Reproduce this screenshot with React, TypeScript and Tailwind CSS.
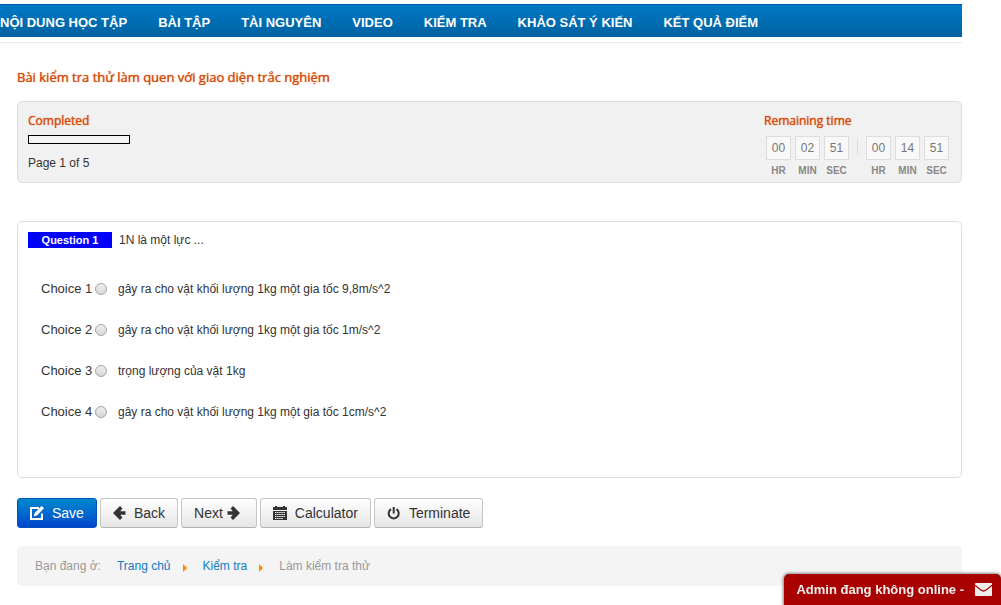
import type { ReactNode } from 'react';

const navItems = [
  'NỘI DUNG HỌC TẬP',
  'BÀI TẬP',
  'TÀI NGUYÊN',
  'VIDEO',
  'KIỂM TRA',
  'KHẢO SÁT Ý KIẾN',
  'KẾT QUẢ ĐIỂM',
];

const choices = [
  'gây ra cho vật khối lượng 1kg một gia tốc 9,8m/s^2',
  'gây ra cho vật khối lượng 1kg một gia tốc 1m/s^2',
  'trọng lượng của vật 1kg',
  'gây ra cho vật khối lượng 1kg một gia tốc 1cm/s^2',
];

function SaveIcon() {
  return (
    <svg width="14" height="14" viewBox="0 0 14 14" fill="none" aria-hidden="true">
      <path d="M9 1.9H1V13h11V7.5" stroke="currentColor" strokeWidth="2" />
      <path d="M11.7 0 14 2.3 7.3 9.2 3.6 10.4l1.2-3.7z" fill="currentColor" />
    </svg>
  );
}

function ArrowIcon({ flip = false }: { flip?: boolean }) {
  return (
    <svg width="13" height="14" viewBox="0 0 13 14" className={flip ? 'rotate-180' : ''} aria-hidden="true">
      <path d="M0 7 7 0 9.4 2.4 7.2 5.2H12.5v3.6H7.2l2.2 2.8L7 14z" fill="currentColor" />
    </svg>
  );
}

function CalculatorIcon() {
  return (
    <svg width="14" height="14" viewBox="0 0 14 14" aria-hidden="true">
      <path d="M0 1h2V0h2v1h6V0h2v1h2v3H0z" fill="currentColor" />
      <path d="M0 5h14v9H0z" fill="currentColor" />
      <path d="M2 6.5h10M2 8.5h10M2 10.5h10M2 12.5h8" stroke="#f2f2f2" strokeDasharray="1.5 .6" />
    </svg>
  );
}

function PowerIcon() {
  return (
    <svg width="14" height="13" viewBox="0 0 14 13" fill="none" stroke="currentColor" strokeWidth="2" aria-hidden="true">
      <path d="M4 2.2a5 5 0 1 0 5.4 0M6.7 0v6.5" />
    </svg>
  );
}

function ToolButton({ children }: { children: ReactNode }) {
  return (
    <button
      type="button"
      className="flex h-[30px] items-center gap-2 rounded-[3px] border border-[#c5c5c5] border-b-[#b3b3b3] bg-linear-to-b from-white to-[#e6e6e6] px-3 text-sm text-[#333]"
    >
      {children}
    </button>
  );
}

function Countdown({ values }: { values: string[] }) {
  return (
    <div className="flex gap-1">
      {['HR', 'MIN', 'SEC'].map((unit, i) => (
        <div key={unit} className="flex w-[25px] flex-col items-center">
          <span className="flex h-6 w-full items-center justify-center border border-[#ddd] bg-[#f8f8f8] text-xs text-[#777]">
            {values[i]}
          </span>
          <span className="mt-1 text-[10px] leading-[14px] font-bold text-[#888]">{unit}</span>
        </div>
      ))}
    </div>
  );
}

function PanelHeading({ children }: { children: string }) {
  return (
    <h2 className="font-['Open_Sans',sans-serif] text-xs leading-[17px] text-[#d64b0c] [text-shadow:0_0_1px_#d64b0c]">
      {children}
    </h2>
  );
}

function Crumb({ children }: { children: string }) {
  return (
    <>
      <a href="#" className="text-[#0f7bc4]">{children}</a>
      <svg width="4" height="8" viewBox="0 0 4 8" className="mt-1 mr-4 ml-3" aria-hidden="true">
        <path d="M0 0 4 4 0 8z" fill="#f80" />
      </svg>
    </>
  );
}

export default function App() {
  return (
    <div className="bg-white pt-1 pr-[39px] font-['Liberation_Sans',Arial,sans-serif] text-xs text-[#333]">
      <nav className="flex h-[33px] items-center gap-[31px] border-t border-[#0055a8] bg-linear-to-b from-[#0079c6] to-[#0062a0] pt-1 text-[13px] font-bold whitespace-nowrap text-white">
        {navItems.map((item) => (
          <a key={item} href="#">{item}</a>
        ))}
      </nav>
      <div className="mt-[5px] border-t border-[#e9e9e9]" />

      <main className="pl-[17px]">
        <h1 className="mt-6 font-['Open_Sans',sans-serif] text-[13px] leading-5 text-[#d64b0c] [text-shadow:0_0_1px_#d64b0c]">
          Bài kiểm tra thử làm quen với giao diện trắc nghiệm
        </h1>

        <section className="mt-[14px] flex justify-between rounded-[5px] border border-[#ddd] bg-[#f1f1f1] px-[10px] pt-[10px] pb-1">
          <div>
            <PanelHeading>Completed</PanelHeading>
            <div className="mt-[6px] h-[9px] w-[102px] border border-black bg-[#f5f5f5]" role="progressbar" aria-label="Completed" aria-valuenow={0} />
            <p className="mt-[11px] leading-4">Page 1 of 5</p>
          </div>
          <div className="pr-[2px]">
            <PanelHeading>Remaining time</PanelHeading>
            <div className="mt-[7px] ml-[2px] flex">
              <Countdown values={['00', '02', '51']} />
              <div className="mx-2 mt-[2px] h-4 w-px bg-[#ddd]" />
              <Countdown values={['00', '14', '51']} />
            </div>
          </div>
        </section>

        <fieldset className="mt-[38px] w-full rounded-[5px] border border-[#ddd] px-[10px] pt-[10px] pb-[45px]">
          <div className="flex items-center">
            <h2 className="w-[84px] bg-[#00f] text-center text-[11px] leading-4 font-bold text-white">Question 1</h2>
            <p className="ml-[7px] leading-4">1N là một lực ...</p>
          </div>
          <div className="mt-5 flex flex-col">
            {choices.map((choice, i) => (
              <label key={choice} className="flex h-[41px] items-center pl-[13px]">
                <span className="w-[54px] text-[13px]">Choice {i + 1}</span>
                <input
                  type="radio"
                  name="answer"
                  className="size-3 appearance-none rounded-full border border-[#a5a5a5] bg-linear-to-b from-[#eee] to-[#d8d8d8] checked:bg-[#555]"
                />
                <span className="ml-[11px]">{choice}</span>
              </label>
            ))}
          </div>
        </fieldset>

        <div className="mt-5 flex gap-[3px]">
          <button
            type="button"
            className="flex h-[30px] items-center gap-2 rounded-[3px] border border-[#0053bb] bg-linear-to-b from-[#0088cc] to-[#0044cc] px-3 text-sm text-white"
          >
            <SaveIcon />Save
          </button>
          <ToolButton><ArrowIcon />Back</ToolButton>
          <ToolButton>
            <span className="-mr-1">Next</span>
            <span className="pr-1"><ArrowIcon flip /></span>
          </ToolButton>
          <ToolButton><CalculatorIcon />Calculator</ToolButton>
          <ToolButton><PowerIcon />Terminate</ToolButton>
        </div>

        <nav aria-label="Breadcrumb" className="mt-[18px] flex h-10 items-center rounded bg-[#f4f4f4] px-[18px] text-[#999]">
          <span className="mr-4">Bạn đang ở:</span>
          <Crumb>Trang chủ</Crumb>
          <Crumb>Kiểm tra</Crumb>
          <span>Làm kiểm tra thử</span>
        </nav>
      </main>

      <button
        type="button"
        className="fixed right-0 bottom-0 flex h-[31px] items-center gap-[11px] rounded-t-[5px] bg-[#a90000] pr-[9px] pl-3 text-[13px] font-bold text-[#eee] shadow-[0_0_3px_1px_#888]"
      >
        Admin đang không online -
        <svg width="17" height="13" viewBox="0 0 17 13" aria-hidden="true">
          <rect width="17" height="13" rx="1" fill="#eee" />
          <path d="M0 2.2C4 5.8 6.5 8 8.5 8S13 5.8 17 2.2" fill="none" stroke="#a90000" strokeWidth="1.3" />
        </svg>
      </button>
    </div>
  );
}
